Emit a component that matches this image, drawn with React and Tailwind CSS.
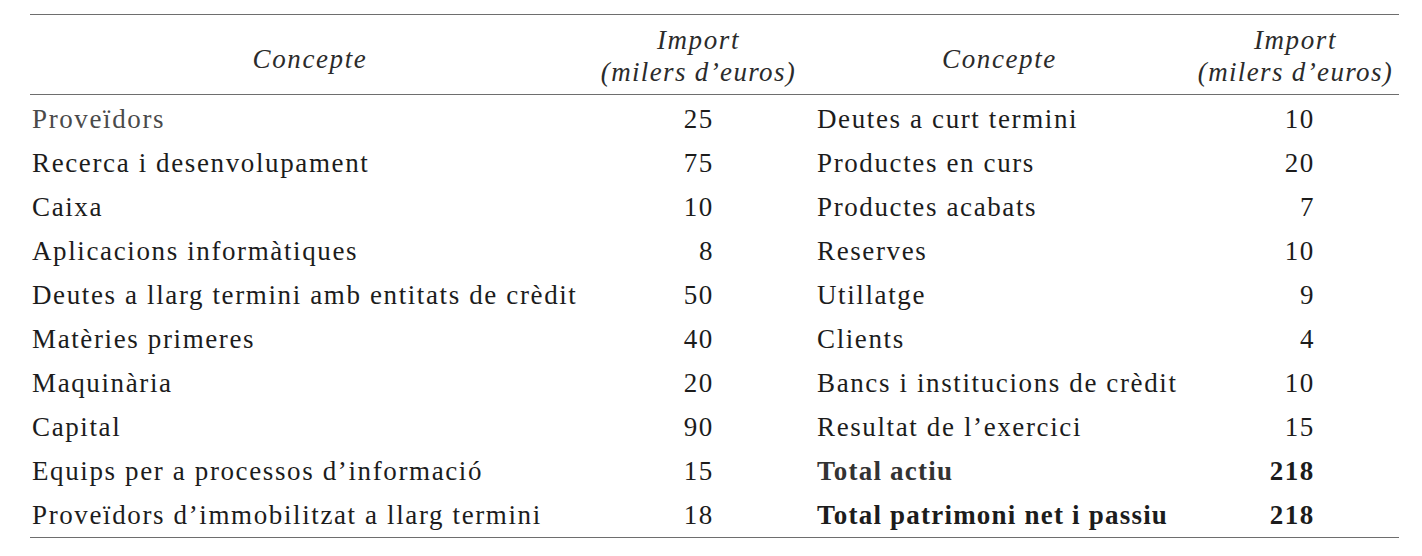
import React from 'react';

// Balanç: two side-by-side concept/import column pairs
const rows = [
    { a: 'Proveïdors', av: '25', b: 'Deutes a curt termini', bv: '10', muted: true },
    { a: 'Recerca i desenvolupament', av: '75', b: 'Productes en curs', bv: '20' },
    { a: 'Caixa', av: '10', b: 'Productes acabats', bv: '7' },
    { a: 'Aplicacions informàtiques', av: '8', b: 'Reserves', bv: '10' },
    { a: 'Deutes a llarg termini amb entitats de crèdit', av: '50', b: 'Utillatge', bv: '9' },
    { a: 'Matèries primeres', av: '40', b: 'Clients', bv: '4' },
    { a: 'Maquinària', av: '20', b: 'Bancs i institucions de crèdit', bv: '10' },
    { a: 'Capital', av: '90', b: "Resultat de l’exercici", bv: '15' },
    { a: 'Equips per a processos d’informació', av: '15', b: 'Total actiu', bv: '218', bold: true, grey: true },
    { a: 'Proveïdors d’immobilitzat a llarg termini', av: '18', b: 'Total patrimoni net i passiu', bv: '218', bold: true },
];

const cols = 'grid grid-cols-[560px_217px_385px_207px]';

const HeaderCell = ({ children }) => (
    <div className="flex flex-col items-center justify-center text-center italic text-[#2b2b2b] leading-[32px]">
        {children}
    </div>
);

const App = () => {
    return (
        <div className="w-[1422px] h-[556px] bg-white pt-[14px] pl-[30px] font-['Liberation_Serif',serif] text-[27px] tracking-[0.06em] text-[#1c1c1c]">
            <div className="w-[1369px] border-t-[1.5px] border-b-[1.5px] border-[#6e6e6e]">
                {/* header */}
                <div className={`${cols} h-[80px] pt-[2px] border-b-[1.5px] border-[#6e6e6e]`}>
                    <HeaderCell>
                        <span className="pt-[6px]">Concepte</span>
                    </HeaderCell>
                    <HeaderCell>
                        <span>Import</span>
                        <span className="tracking-[0.05em]">(milers d’euros)</span>
                    </HeaderCell>
                    <HeaderCell>
                        <span className="pt-[6px]">Concepte</span>
                    </HeaderCell>
                    <HeaderCell>
                        <span>Import</span>
                        <span className="tracking-[0.05em]">(milers d’euros)</span>
                    </HeaderCell>
                </div>

                {/* body */}
                <div className="pt-[2px]">
                    {rows.map((r, i) => (
                        <div key={i} className={`${cols} h-[44px] leading-[44px] whitespace-nowrap`}>
                            <div className={`pl-[2px] ${r.muted ? 'text-[#4a4a4a]' : ''}`}>{r.a}</div>
                            <div className="text-right pr-[93px]">{r.av}</div>
                            <div className={`pl-[10px] ${r.bold ? 'font-bold tracking-[0.045em]' : ''} ${r.grey ? 'text-[#333333]' : ''}`}>{r.b}</div>
                            <div className={`text-right pr-[84px] ${r.bold ? 'font-bold' : ''}`}>{r.bv}</div>
                        </div>
                    ))}
                </div>
            </div>
        </div>
    );
};

export default App;
